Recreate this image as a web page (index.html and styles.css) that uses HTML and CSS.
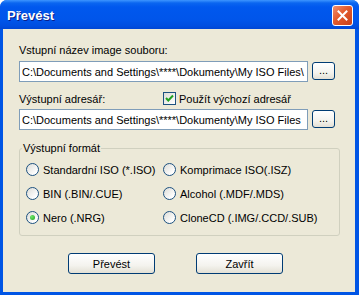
FILE: index.html
```html
<!DOCTYPE html>
<html lang="cs">
<head>
    <meta charset="UTF-8">
    <title>Převést</title>
    <link rel="stylesheet" href="styles.css">
</head>
<body>
    <div class="window">
        <div class="titlebar">
            <span class="title">Převést</span>
            <button class="close-btn" type="button">
                <svg width="11" height="11" viewBox="0 0 11 11"><path d="M1.5 1.5 L9.5 9.5 M9.5 1.5 L1.5 9.5" stroke="#fff" stroke-width="2" stroke-linecap="square"/></svg>
            </button>
        </div>
        <div class="client">
            <div class="label">Vstupní název image souboru:</div>
            <div class="path-row">
                <input class="path" type="text" value="C:\Documents and Settings\****\Dokumenty\My ISO Files\" readonly>
                <button class="browse-btn" type="button">...</button>
            </div>

            <div class="label-row">
                <span class="label-inline">Výstupní adresář:</span>
                <label class="check">
                    <span class="checkbox">
                        <svg width="11" height="11" viewBox="0 0 11 11"><path d="M2 5 L4.3 7.5 L9 2.5" fill="none" stroke="#21a121" stroke-width="2"/></svg>
                    </span>
                    Použít výchozí adresář
                </label>
            </div>
            <div class="path-row">
                <input class="path" type="text" value="C:\Documents and Settings\****\Dokumenty\My ISO Files" readonly>
                <button class="browse-btn" type="button">...</button>
            </div>

            <fieldset class="group">
                <legend>Výstupní formát</legend>
                <div class="radio-grid">
                    <label class="radio-item"><span class="radio"></span>Standardní ISO (*.ISO)</label>
                    <label class="radio-item"><span class="radio"></span>Komprimace ISO(.ISZ)</label>
                    <label class="radio-item"><span class="radio"></span>BIN (.BIN/.CUE)</label>
                    <label class="radio-item"><span class="radio"></span>Alcohol (.MDF/.MDS)</label>
                    <label class="radio-item"><span class="radio checked"></span>Nero (.NRG)</label>
                    <label class="radio-item"><span class="radio"></span>CloneCD (.IMG/.CCD/.SUB)</label>
                </div>
            </fieldset>

            <div class="actions">
                <button class="btn" type="button">Převést</button>
                <button class="btn" type="button">Zavřít</button>
            </div>
        </div>
    </div>
</body>
</html>
```

FILE: styles.css
```css
body {
    margin: 0;
    font-family: "Liberation Sans", Arial, sans-serif;
    font-size: 11px;
    color: #000;
}
.window {
    width: 359px;
    height: 295px;
    box-sizing: border-box;
    background: #0055e5;
    border-radius: 7px 7px 0 0;
    display: flex;
    flex-direction: column;
    overflow: hidden;
}
.titlebar {
    height: 29px;
    flex: none;
    display: flex;
    align-items: center;
    justify-content: space-between;
    padding: 0 6px 0 7px;
    background: linear-gradient(#3d95ff 0, #0a66f0 3px, #0058ee 7px, #0055ea 20px, #004ee0 26px, #0046d4 29px);
}
.title {
    color: #fff;
    font-weight: bold;
    font-size: 13px;
    text-shadow: 1px 1px 0 #0a1e8a;
    margin-top: 1px;
}
.close-btn {
    width: 21px;
    height: 21px;
    padding: 0;
    border: 1px solid #fff;
    border-radius: 3px;
    background: linear-gradient(135deg, #f09070 0%, #e35a2c 45%, #c8401a 100%);
    display: flex;
    align-items: center;
    justify-content: center;
    margin-top: 1px;
}
.client {
    flex: 1;
    margin: 0 4px 3px 3px;
    background: #ece9d8;
    padding: 15px 20px 0 16px;
}
.label {
    line-height: 13px;
    margin-bottom: 4px;
}
.path-row {
    display: flex;
    align-items: flex-start;
}
.path {
    width: 289px;
    height: 21px;
    box-sizing: border-box;
    border: 1px solid #7f9db9;
    background: #fff;
    padding: 0 2px;
    font: inherit;
    color: #000;
    outline: none;
}
.browse-btn {
    margin-left: 4px;
    margin-top: 1px;
    width: 23px;
    height: 18px;
    box-sizing: border-box;
    padding: 0 0 3px;
    border: 1px solid #003c74;
    border-radius: 3px;
    background: linear-gradient(#ffffff, #f4f3ee 60%, #e3e0d5);
    font: inherit;
    line-height: 10px;
}
.label-row {
    display: flex;
    align-items: center;
    margin-top: 10px;
    margin-bottom: 4px;
    height: 13px;
}
.label-inline {
    width: 144px;
}
.check {
    display: flex;
    align-items: center;
    gap: 3px;
}
.checkbox {
    width: 13px;
    height: 13px;
    box-sizing: border-box;
    border: 1px solid #1c5180;
    background: linear-gradient(135deg, #dcdcd7, #ffffff);
    display: flex;
    align-items: center;
    justify-content: center;
}
.group {
    width: 321px;
    box-sizing: border-box;
    margin: 12px 0 0;
    padding: 0 6px 11px;
    border: 1px solid #d0d0bf;
    border-radius: 3px;
}
.group legend {
    padding: 0 1px;
    margin-left: -4px;
    line-height: 13px;
}
.radio-grid {
    display: grid;
    grid-template-columns: 137px 1fr;
    row-gap: 11px;
    padding-top: 8px;
}
.radio-item {
    display: flex;
    align-items: center;
    gap: 4px;
    height: 13px;
}
.radio {
    width: 13px;
    height: 13px;
    box-sizing: border-box;
    border: 1px solid #1c5180;
    border-radius: 50%;
    background: linear-gradient(135deg, #dcdcd7, #ffffff 80%);
    display: flex;
    align-items: center;
    justify-content: center;
    flex: none;
}
.radio.checked::after {
    content: "";
    width: 5px;
    height: 5px;
    border-radius: 50%;
    background: radial-gradient(circle at 35% 35%, #6ee86a, #21a121);
}
.actions {
    display: flex;
    gap: 41px;
    padding-left: 49px;
    margin-top: 17px;
}
.btn {
    width: 87px;
    height: 21px;
    box-sizing: border-box;
    border: 1px solid #003c74;
    border-radius: 3px;
    background: linear-gradient(#ffffff, #f4f3ee 60%, #e3e0d5);
    font: inherit;
    padding: 0;
}
```
